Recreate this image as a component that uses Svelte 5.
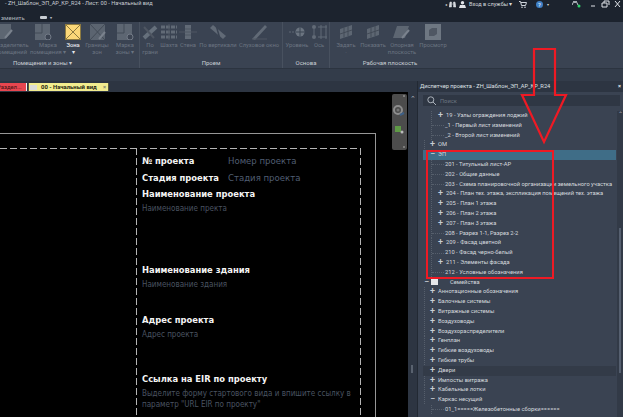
<script>
  const top = [
    { no: "19 - Узлы ограждения лоджий", lvl: 2, plus: true },
    { no: "_1 - Первый лист изменений", lvl: 2 },
    { no: "_2 - Второй лист изменений", lvl: 2 },
    { no: "ОМ", lvl: 1, plus: true },
    { no: "ЭП", lvl: 1, minus: true, selected: true },
    { no: "201 - Титульный лист-АР", lvl: 2 },
    { no: "202 - Общие данные", lvl: 2 },
    { no: "203 - Схема планировочной организации земельного участка", lvl: 2 },
    { no: "204 - План тех. этажа, экспликация помещений тех. этажа", lvl: 2, plus: true },
    { no: "205 - План 1 этажа", lvl: 2, plus: true },
    { no: "206 - План 2 этажа", lvl: 2, plus: true },
    { no: "207 - План 3 этажа", lvl: 2, plus: true },
    { no: "208 - Разрез 1-1, Разрез 2-2", lvl: 2 },
    { no: "209 - Фасад цветной", lvl: 2, plus: true },
    { no: "210 - Фасад черно-белый", lvl: 2 },
    { no: "211 - Элементы фасада", lvl: 2, plus: true },
    { no: "212 - Условные обозначения", lvl: 2 },
    { no: "Семейства", lvl: 0, minus: true, fam: true },
    { no: "Аннотационные обозначения", lvl: 1, plus: true },
    { no: "Балочные системы", lvl: 1, plus: true },
    { no: "Витражные системы", lvl: 1, plus: true },
    { no: "Воздуховоды", lvl: 1, plus: true },
    { no: "Воздухораспределители", lvl: 1, plus: true },
    { no: "Генплан", lvl: 1, plus: true },
    { no: "Гибкие воздуховоды", lvl: 1, plus: true },
    { no: "Гибкие трубы", lvl: 1, plus: true },
    { no: "Двери", lvl: 1, plus: true, hover: true },
    { no: "Импосты витража", lvl: 1, plus: true },
    { no: "Кабельные лотки", lvl: 1, plus: true },
    { no: "Каркас несущий", lvl: 1, minus: true },
    { no: "01_1=====Железобетонные сборки======", lvl: 2 }
  ];

  const groups = [
    { title: "Помещения и зоны ▾", w: 194, tools: [
      { a: "Разделитель", b: "помещений", w: 46, k: "sep", s: 14 },
      { a: "Марка", b: "помещения ▾", w: 28, k: "tag", s: 10 },
      { a: "Зона", b: "▾", w: 22, k: "zone", on: true },
      { a: "Границы", b: "зон", w: 26, k: "room" },
      { a: "Марка", b: "зоны ▾", w: 30, k: "tag" }
    ]},
    { title: "Проем", w: 143, tools: [
      { a: "По", b: "грани", w: 20, k: "cut" },
      { a: "Шахта", b: "", w: 18, k: "grid" },
      { a: "Стена", b: "", w: 20, k: "wall" },
      { a: "По вертикали", b: "", w: 40, k: "beam" },
      { a: "Слуховое окно", b: "", w: 42, k: "dorm" }
    ]},
    { title: "Основа", w: 47, tools: [
      { a: "Уровень", b: "", w: 28, k: "level" },
      { a: "Ось", b: "", w: 16, k: "axis" }
    ]},
    { title: "Рабочая плоскость", w: 120, tools: [
      { a: "Задать", b: "·", w: 32, k: "plane" },
      { a: "Показать", b: "", w: 22, k: "plane" },
      { a: "Опорная", b: "плоскость", w: 36, k: "ref" },
      { a: "Просмотр", b: "", w: 26, k: "view" }
    ]}
  ];
</script>

<div class="page">
  <header class="title">
    <span class="title-text">- ZH_Шаблон_ЭП_АР_КР_R24 - Лист: 00 - Начальный вид</span>
    <div class="title-right">
      <span class="caret">◂</span>
      <svg class="binoc" width="7" height="7" viewBox="0 0 7 7"><path d="M1 1h1.500v5H0zM4.500 1H6l1 5H4.500zM2.500 3h2" fill="#d5d9de" stroke="#d5d9de" stroke-width=".5"/></svg>
      <svg class="user" width="7" height="7" viewBox="0 0 7 7"><circle cx="3.500" cy="1.800" r="1.700" fill="#e0e3e7"/><path d="M0 7l1-3h5l1 3z" fill="#e0e3e7"/></svg>
      <span class="login">Вход в службы ▾</span>
      <svg class="cart" width="8" height="7" viewBox="0 0 8 7"><path d="M0 .5h1.500l1 4h4l1-3H2" fill="none" stroke="#cfd5dc"/><circle cx="3" cy="6.200" r=".8" fill="#cfd5dc"/><circle cx="6" cy="6.200" r=".8" fill="#cfd5dc"/></svg>
      <span class="help">?</span>
      <span class="dot">▾</span>
      <svg class="win" width="49" height="8" viewBox="0 0 49 8"><path d="M0 5l2-4 1 2 1-2 2 4" fill="none" stroke="#c6cbd1"/><circle cx="7" cy="6" r="1.500" fill="#2fd36b"/><path d="M19 6h4M30 3h5v4h-5zM32 3V1h5v4M43 1l5 6M48 1l-5 6" fill="none" stroke="#dfe3e8"/></svg>
    </div>
  </header>
  <div class="menu"><span>зменить</span><i class="menu-chip"></i><b>▾</b></div>

  <section class="ribbon">
    {#each groups as g}
      <div class="group" style="width:{g.w}px">
        <div class="tools">
          {#each g.tools as t}
            <div class="tool" class:on={t.on} style="width:{t.w}px">
              <svg width="18" height="16" viewBox="0 0 18 16" class="ico" style="margin-right:{t.s || 0}px">
                {#if t.k === "zone"}
                  <rect x="1.500" y=".5" width="15" height="15" fill="#fbd778" stroke="#8d7a40"/><path d="M1.500 .5l15 15M16.500 .5l-15 15" stroke="#8d7a40"/>
                {:else if t.k === "sep"}
                  <path d="M1 0h15v9l-6 6H1z" fill="#5d6672"/><path d="M17 6l-7 8" stroke="#7a828d" stroke-width="2"/>
                {:else if t.k === "room"}
                  <rect x="2" y="0" width="15" height="16" fill="#5b6470"/><path d="M2 0l15 16M17 0L2 16" stroke="#434b57"/><path d="M17 8l-6 7" stroke="#7a828d" stroke-width="2"/>
                {:else if t.k === "tag"}
                  <rect x="1" y="0" width="15" height="16" fill="#5d6672"/><path d="M8 0v9H1" stroke="#434b57" fill="none"/><circle cx="14" cy="13" r="3" fill="#3c4452" stroke="#727a86"/>
                {:else if t.k === "cut"}
                  <path d="M3 14L15 3" stroke="#66707c" stroke-width="4"/><path d="M3 3l10 11" stroke="#4e5662" stroke-width="2"/>
                {:else if t.k === "grid"}
                  <path d="M1 3h16M1 8h16M1 13h16" stroke="#616a76" stroke-width="3" stroke-dasharray="4 1"/><path d="M9 0v16" stroke="#4e5662"/>
                {:else if t.k === "wall"}
                  <path d="M6 1h6v14H6z" fill="#616a76"/><path d="M0 8h18M6 5h6M6 11h6" stroke="#4e5662"/>
                {:else if t.k === "beam"}
                  <path d="M1 4l3-3 13 11-3 3z" fill="#616a76"/><path d="M7 1l4 14" stroke="#3a4352" stroke-width="1.500"/>
                {:else if t.k === "dorm"}
                  <path d="M2 15L15 1l2 2L5 16z" fill="#616a76"/><path d="M2 15h15" stroke="#4e5662"/>
                {:else if t.k === "level"}
                  <path d="M1 8h7" stroke="#5f6874" stroke-dasharray="2 1"/><circle cx="12" cy="8" r="4.500" fill="#6b7480"/><path d="M12 3.500v9M7.500 8h9" stroke="#3b4453"/>
                {:else if t.k === "axis"}
                  <circle cx="4" cy="3" r="2" fill="#616a76"/><circle cx="4" cy="13" r="2" fill="#616a76"/><path d="M4 5v6M8 3h9M8 13h9M11 1v14M16 1v14" stroke="#616a76"/>
                {:else if t.k === "plane"}
                  <path d="M3 5l12-4v10L3 15z" fill="#5d6672"/><path d="M3 10l12-4M7 3.500v10M11 2v10" stroke="#434b57"/>
                {:else if t.k === "ref"}
                  <path d="M4 2h12l-4 12H0z" fill="#5d6672"/><path d="M16 6l-7 8" stroke="#7a828d" stroke-width="2"/>
                {:else}
                  <rect x="1" y="0" width="16" height="16" fill="#6e7782"/><path d="M5 6l3-2h5v6l-3 2H5z" fill="#4f5763"/>
                {/if}
              </svg>
              <span>{t.a}</span>
              {#if t.b}<span>{t.b}</span>{/if}
            </div>
          {/each}
        </div>
        <div class="group-name">{g.title}</div>
      </div>
    {/each}
  </section>
  <div class="strip"></div>

  <main class="work">
    <div class="left">
      <div class="tabs">
        <div class="tab red">Раздел...</div>
        <div class="tab yellow"><i></i><span>00 - Начальный вид</span><b>×</b></div>
        <span class="tab-menu">▾</span>
      </div>
      <div class="canvas">
        <div class="sheet">
          <div class="inner">
            <div class="stamp">
              <div class="row"><span class="big">№ проекта</span><span class="val">Номер проекта</span></div>
              <div class="row"><span class="big">Стадия проекта</span><span class="val">Стадия проекта</span></div>
              <div class="big">Наименование проекта</div>
              <div class="hint">Наименование пректа</div>
              <div class="big b2">Наименование здания</div>
              <div class="hint">Наименование здания</div>
              <div class="big b3">Адрес проекта</div>
              <div class="hint">Адрес проекта</div>
              <div class="big b4">Ссылка на EIR по проекту</div>
              <div class="hint">Выделите форму стартового вида и впишите ссылку в<br />параметр "URL EIR по проекту"</div>
            </div>
          </div>
        </div>
        <div class="nav">
          <svg width="15" height="56" viewBox="0 0 15 56">
            <circle cx="6" cy="16" r="4" fill="none" stroke="#8d8d8d" stroke-width="2"/>
            <circle cx="6" cy="16" r="1.500" fill="#777"/>
            <path d="M8 21l4-2" stroke="#3d5f86" stroke-width="2"/>
            <rect x="3" y="32" width="6" height="6" fill="#5f9a46"/>
            <circle cx="10" cy="38" r="1.500" fill="#bbb"/>
            <circle cx="12" cy="2" r=".8" fill="#bbb"/>
            <circle cx="12" cy="53" r=".8" fill="#bbb"/>
          </svg>
        </div>
      </div>
    </div>
    <div class="vscroll"><b>⌃</b><i></i></div>

    <aside class="browser">
      <div class="browser-head"><span>Диспетчер проекта - ZH_Шаблон_ЭП_АР_КР_R24</span><b>×</b></div>
      <div class="search">
        <svg width="9" height="9" viewBox="0 0 9 9"><circle cx="3.800" cy="3.800" r="3" fill="none" stroke="#aab1ba"/><path d="M6 6l3 3" stroke="#aab1ba"/></svg>
        <span>Поиск</span>
      </div>
      <div class="tree-wrap">
        <div class="tree">
          {#each top as r}
            <div class="node lvl{r.lvl}" class:selected={r.selected} class:hover={r.hover}>
              <span class="mark" class:stub={!r.plus && !r.minus}>{r.plus ? "+" : r.minus ? "−" : ""}</span>
              {#if r.fam}<i class="fam"></i>{/if}
              <span class="label">{r.no}</span>
            </div>
          {/each}
        </div>
        <div class="tree-scroll"><b>⌃</b><i></i></div>
      </div>
    </aside>
  </main>

  <svg class="marks" width="623" height="417" viewBox="0 0 623 417">
    <path d="M534 49h21v46h11l-22 47-22-47h12z" fill="none" stroke="#ee1a24" stroke-width="2.200"/>
    <rect x="427" y="151" width="126" height="127" fill="none" stroke="#ee1a24" stroke-width="2"/>
  </svg>
</div>

<style>
  :global(body) {
    margin: 0;
    background: #000;
  }
  .page {
    position: relative;
    width: 623px;
    height: 417px;
    overflow: hidden;
    display: flex;
    flex-direction: column;
    font-family: Roboto, "Liberation Sans", sans-serif;
    font-size: 5.750px;
    color: #d5d9de;
    background: #000;
  }
  .title {
    height: 13px;
    background: #1c232e;
    display: flex;
    align-items: flex-start;
    justify-content: space-between;
    padding: 0 2px 0 5px;
    flex: none;
  }
  .title-text {
    font-size: 5.600px;
    line-height: 7px;
    color: #c8ccd2;
  }
  .title-right {
    display: flex;
    align-items: center;
    height: 8px;
  }
  .caret {
    font-size: 4px;
  }
  .binoc {
    margin-left: 2px;
  }
  .user {
    margin-left: 3px;
  }
  .login {
    margin-left: 3px;
    width: 50px;
    font-size: 5.600px;
    white-space: nowrap;
  }
  .help {
    width: 7px;
    height: 7px;
    border-radius: 50%;
    background: #3f7fc4;
    color: #fff;
    font-size: 6px;
    line-height: 7px;
    text-align: center;
    margin-left: 9px;
  }
  .dot {
    margin-left: 4px;
    font-size: 4px;
  }
  .win {
    margin-left: 23px;
  }
  .menu {
    height: 9px;
    background: #1c232e;
    flex: none;
    display: flex;
    align-items: center;
    color: #aeb4bc;
    font-size: 6px;
    padding-left: 1px;
  }
  .menu b {
    margin-left: 3px;
    font-size: 4px;
  }
  .menu-chip {
    width: 7px;
    height: 3px;
    margin-left: 15px;
    background: #c9ced4;
    border-radius: 1px;
  }
  .ribbon {
    height: 46px;
    background: #3a4352;
    border-bottom: 1px solid #2c3440;
    display: flex;
    flex: none;
    margin-left: -54px;
  }
  .group {
    border-right: 1px solid #48515f;
    display: flex;
    flex-direction: column;
    flex: none;
    box-sizing: border-box;
  }
  .group:last-child {
    border-right: none;
  }
  .group:first-child .tools {
    padding-left: 42px;
  }
  .tools {
    display: flex;
    flex: 1;
    padding-top: 2px;
  }
  .tool {
    display: flex;
    flex-direction: column;
    align-items: center;
    color: #6b7481;
    font-size: 5.800px;
    line-height: 7.400px;
    white-space: nowrap;
    flex: none;
  }
  .tool.on {
    color: #e6e8eb;
    font-weight: 500;
  }
  .ico {
    margin-bottom: 2px;
    flex: none;
  }
  .group-name {
    text-align: center;
    color: #c9ced4;
    font-size: 6px;
    line-height: 9px;
    height: 10px;
  }
  .strip {
    height: 13px;
    background: #333c4a;
    flex: none;
  }
  .work {
    flex: 1;
    display: flex;
    min-height: 0;
    margin-top: -1px;
  }
  .left {
    width: 408px;
    display: flex;
    flex-direction: column;
    flex: none;
  }
  .tabs {
    height: 11px;
    background: #2d3542;
    display: flex;
    align-items: stretch;
    gap: 1px;
    padding-top: 2px;
    padding-bottom: 1px;
    box-sizing: border-box;
    position: relative;
    flex: none;
  }
  .tab {
    font-size: 5.900px;
    line-height: 8px;
    white-space: nowrap;
    overflow: hidden;
  }
  .red {
    width: 26px;
    background: #e8464f;
    color: #3a1010;
    text-indent: -3px;
    border-right: 1px solid #f2f2f2;
  }
  .yellow {
    width: 81px;
    background: #f2ec8e;
    color: #1b1b10;
    font-weight: 700;
    display: flex;
    align-items: center;
    gap: 4px;
    padding: 0 2px 0 1px;
    box-sizing: border-box;
    border: 1px solid #55553a;
    border-width: 0 1px;
  }
  .yellow i {
    width: 7px;
    height: 5px;
    background: #dcdcd8;
    flex: none;
  }
  .yellow b {
    margin-left: auto;
    color: #8a8a70;
  }
  .tab-menu {
    position: absolute;
    right: -7px;
    top: 1px;
    font-size: 6px;
    color: #aeb4bc;
    line-height: 10px;
  }
  .canvas {
    flex: 1;
    position: relative;
    background: #000;
    padding-top: 41px;
    overflow: hidden;
  }
  .sheet {
    width: 376px;
    height: 400px;
    border: solid #979797;
    border-width: 1px 1px 0 0;
    padding-top: 14px;
    box-sizing: border-box;
  }
  .inner {
    width: 361px;
    height: 400px;
    box-sizing: border-box;
    background:
      repeating-linear-gradient(90deg, #b5b5b5 0 7px, transparent 7px 10px) top left / 100% 1px no-repeat,
      repeating-linear-gradient(180deg, #b5b5b5 0 7px, transparent 7px 10px) top right / 1px 100% no-repeat;
    padding-left: 136px;
  }
  .stamp {
    height: 100%;
    padding: 6px 0 0 6px;
    background: repeating-linear-gradient(180deg, #b5b5b5 0 7px, transparent 7px 10px) top left / 1px 100% no-repeat;
    box-sizing: border-box;
  }
  .row {
    display: flex;
    height: 16.500px;
  }
  .row .big {
    width: 86px;
    flex: none;
  }
  .big {
    font-family: "DejaVu Sans Condensed", "DejaVu Sans", sans-serif;
    font-weight: 700;
    font-size: 9.300px;
    line-height: 13px;
    color: #f4f4f4;
    white-space: nowrap;
  }
  .val {
    font-family: "DejaVu Sans Condensed", "DejaVu Sans", sans-serif;
    font-size: 9.500px;
    line-height: 13px;
    color: #505e72;
    white-space: nowrap;
  }
  .hint {
    font-family: "DejaVu Sans Condensed", "DejaVu Sans", sans-serif;
    font-size: 8px;
    line-height: 11.500px;
    color: #4a5361;
    white-space: nowrap;
    margin-top: 3px;
  }
  .b2 {
    margin-top: 48px;
  }
  .b3 {
    margin-top: 23px;
  }
  .b4 {
    margin-top: 31px;
  }
  .nav {
    position: absolute;
    right: 1px;
    top: 2px;
    width: 15px;
    height: 56px;
    background: #4c4c4c;
    border-radius: 2px;
  }
  .vscroll {
    width: 9px;
    background: #2d3542;
    flex: none;
    position: relative;
    text-align: center;
    color: #aeb4bc;
    line-height: 8px;
    padding-top: 14px;
    box-sizing: border-box;
  }
  .vscroll b {
    font-size: 7px;
    font-weight: 400;
  }
  .vscroll i {
    position: absolute;
    left: 3px;
    top: 284px;
    width: 2px;
    height: 8px;
    background: #59626f;
  }
  .browser {
    flex: 1;
    background: #3a4352;
    display: flex;
    flex-direction: column;
    min-width: 0;
    border-left: 1px solid #222933;
  }
  .browser-head {
    height: 11px;
    background: #2d3542;
    line-height: 11px;
    font-size: 5.700px;
    color: #dfe2e6;
    padding: 0 2px;
    display: flex;
    justify-content: space-between;
    white-space: nowrap;
    flex: none;
  }
  .search {
    height: 11px;
    margin: 3px 3px 5px 5px;
    background: #2f3744;
    display: flex;
    align-items: center;
    gap: 4px;
    padding-left: 4px;
    color: #6d7683;
    flex: none;
  }
  .tree-wrap {
    flex: 1;
    display: flex;
    min-height: 0;
    padding-left: 5px;
    overflow: hidden;
  }
  .tree {
    flex: 1;
    min-width: 0;
  }
  .node {
    height: 9.800px;
    line-height: 9.800px;
    display: flex;
    align-items: center;
    white-space: nowrap;
  }
  .mark {
    width: 7px;
    flex: none;
    text-align: center;
    font-size: 9px;
    font-weight: 500;
    color: #c8cdd3;
    margin-right: 2px;
  }
  .mark.stub {
    width: 12px;
    height: 0;
    margin-left: -5px;
    margin-right: 1px;
    border-top: 1px dotted #565f6c;
  }
  .lvl1 {
    padding-left: 6px;
    background: repeating-linear-gradient(180deg, #565f6c 0 1px, transparent 1px 2px) 1px 0 / 1px 100% no-repeat;
  }
  .lvl2 {
    padding-left: 14px;
    background: repeating-linear-gradient(180deg, #565f6c 0 1px, transparent 1px 2px) 8px 0 / 1px 100% no-repeat;
  }
  .selected {
    background: #3f6d87;
  }
  .hover {
    background: #333b48;
  }
  .fam {
    width: 7px;
    height: 6px;
    background: #e5e7ea;
    margin-left: -1px;
    margin-right: 12px;
    flex: none;
  }
  .tree-scroll {
    width: 6px;
    margin-left: 1px;
    background: #323a47;
    flex: none;
    position: relative;
    text-align: center;
    line-height: 6px;
    color: #aeb4bc;
  }
  .tree-scroll b {
    font-size: 6px;
    font-weight: 400;
  }
  .tree-scroll i {
    position: absolute;
    left: 2px;
    top: 117px;
    width: 2px;
    height: 145px;
    background: #566070;
  }
  .marks {
    position: absolute;
    left: 0;
    top: 0;
    pointer-events: none;
  }
</style>
